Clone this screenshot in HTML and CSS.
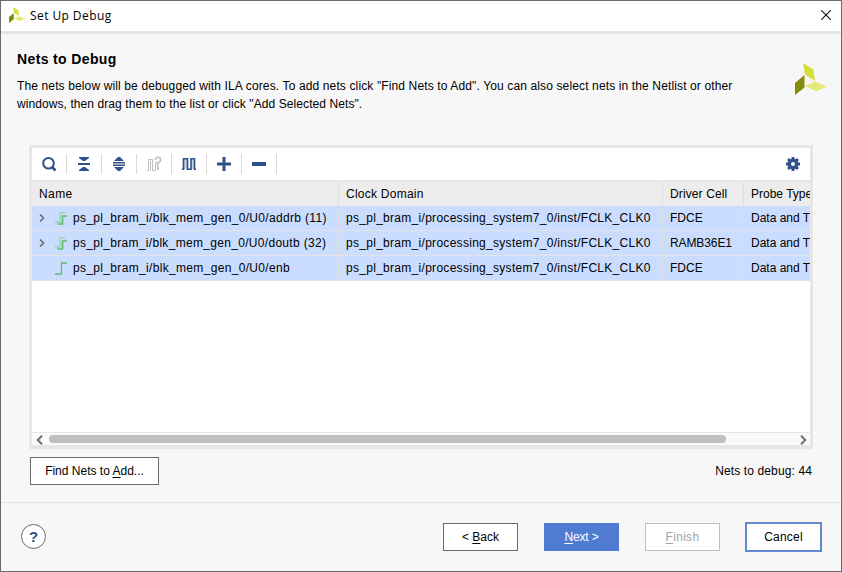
FILE: index.html
```html
<!DOCTYPE html>
<html lang="en">
<head>
<meta charset="utf-8">
<title>Set Up Debug</title>
<link rel="stylesheet" href="styles.css">
</head>
<body>
<svg width="0" height="0" class="defs">
  <symbol id="logo" viewBox="0 0 32 32"><path d="M8 0l10.500 6.500L20 18 10 11.500z" fill="#d5df39"/><path d="M0 20L9.500 12v12.500L0 32z" fill="#858b0b"/><path d="M10 23l10-4.500L32 23.500 21 28.500z" fill="#e3e97c"/></symbol>
  <symbol id="bus" viewBox="0 0 12 13"><path d="M0 10h5V1h5" fill="none" stroke="#9bd4ae" stroke-width="1.300"/><path d="M2.500 12h5V4H12" fill="none" stroke="#5dbb70" stroke-width="1.600"/></symbol>
</svg>
<div class="window">
  <header class="titlebar">
    <svg class="app-icon"><use href="#logo"/></svg>
    <span class="title">Set Up Debug</span>
    <svg class="close" width="10" height="10" viewBox="0 0 10 10"><path d="M.2.200l9.600 9.600M9.800.200L.2 9.800" stroke="#111" stroke-width="1.100"/></svg>
  </header>
  <section class="intro">
    <div>
      <h1>Nets to Debug</h1>
      <p><span class="line-one">The nets below will be debugged with ILA cores. To add nets click "Find Nets to Add". You can also select nets in the Netlist or other</span><br><span class="line-two">windows, then drag them to the list or click "Add Selected Nets".</span></p>
    </div>
    <svg class="brand"><use href="#logo"/></svg>
  </section>
  <main class="panel">
    <div class="toolbar">
      <span class="tool"><svg width="16" height="16" viewBox="0 0 16 16"><circle cx="7.500" cy="7.300" r="5.300" fill="none" stroke="#30508a" stroke-width="2"/><path d="M11 11l3.500 3.500" stroke="#30508a" stroke-width="2.700"/></svg></span>
      <span class="tool"><svg width="16" height="16" viewBox="0 0 16 16" fill="#30508a"><path d="M3 1h10v1L9 5H7L3 2zM2 7h12v2H2zM7 11h2l4 3v1H3v-1z"/></svg></span>
      <span class="tool"><svg width="16" height="16" viewBox="0 0 16 16" fill="#30508a"><path d="M7 1h2l4 4H3zM2 6h12v1.500H2zM2 8.500h12V10H2zM3 11h10l-4 4H7z"/></svg></span>
      <span class="tool"><svg width="16" height="16" viewBox="0 0 16 16" fill="none" stroke="#bfbfbf"><path d="M1 14.500h1.500v-11h4v11h3v-8h2M4.500 5v9.500M11.500 8v6.500"/><path d="M9.500 4V2.500l1-1h3l1 1V5L12 7v2.500M12 11v3" stroke-width="1.600"/></svg></span>
      <span class="tool"><svg width="16" height="16" viewBox="0 0 16 16"><path d="M2 3h4v10H2zM10 3h4v10h-4z" fill="#c9d3e4"/><path d="M1 13.200h1.500V2.800h4v10.400h3.500V2.800h3.500v10.400H15" fill="none" stroke="#30508a" stroke-width="1.600"/></svg></span>
      <span class="tool"><svg width="16" height="16" viewBox="0 0 16 16"><path d="M8 1v14M1 8h14" stroke="#30508a" stroke-width="3"/></svg></span>
      <span class="tool"><svg width="16" height="16" viewBox="0 0 16 16"><path d="M1 8h14" stroke="#30508a" stroke-width="4"/></svg></span>
      <svg class="gear" width="16" height="16" viewBox="0 0 16 16"><path d="M8 1v14M1 8h14M3 3l10 10M13 3L3 13" stroke="#30508a" stroke-width="2.800"/><circle cx="8" cy="8" r="3.700" fill="#fff" stroke="#30508a" stroke-width="3.400"/></svg>
    </div>
    <div class="row head"><div class="cell"><span class="h1w">Name</span></div><div class="cell"><span class="h2w">Clock Domain</span></div><div class="cell"><span class="h3w">Driver Cell</span></div><div class="cell"><span>Probe Type</span></div></div>
    <div class="row"><div class="cell"><svg class="arrow" width="6" height="8" viewBox="0 0 6 8"><path d="M1 .5L4.500 4 1 7.500"/></svg><svg class="wave"><use href="#bus"/></svg><span class="net">ps_pl_bram_i/blk_mem_gen_0/U0/addrb (11)</span></div><div class="cell"><span class="clk">ps_pl_bram_i/processing_system7_0/inst/FCLK_CLK0</span></div><div class="cell"><span>FDCE</span></div><div class="cell"><span>Data and Trigger</span></div></div>
    <div class="row"><div class="cell"><svg class="arrow" width="6" height="8" viewBox="0 0 6 8"><path d="M1 .5L4.500 4 1 7.500"/></svg><svg class="wave"><use href="#bus"/></svg><span class="net second">ps_pl_bram_i/blk_mem_gen_0/U0/doutb (32)</span></div><div class="cell"><span class="clk">ps_pl_bram_i/processing_system7_0/inst/FCLK_CLK0</span></div><div class="cell"><span class="ram">RAMB36E1</span></div><div class="cell"><span>Data and Trigger</span></div></div>
    <div class="row"><div class="cell"><span class="arrow"></span><svg class="wave" viewBox="0 0 12 13"><path d="M0 12h6.500V1H12" fill="none" stroke="#5dbb70" stroke-width="1.300"/></svg><span class="net">ps_pl_bram_i/blk_mem_gen_0/U0/enb</span></div><div class="cell"><span class="clk">ps_pl_bram_i/processing_system7_0/inst/FCLK_CLK0</span></div><div class="cell"><span>FDCE</span></div><div class="cell"><span>Data and Trigger</span></div></div>
    <div class="scrollbar">
      <svg width="7" height="10" viewBox="0 0 7 10"><path d="M6 .7L1.700 5 6 9.300"/></svg>
      <div class="track"><div class="thumb"></div></div>
      <svg width="7" height="10" viewBox="0 0 7 10"><path d="M1 .7L5.300 5 1 9.300"/></svg>
    </div>
  </main>
  <div class="below"><button class="find">Find Nets to <u>A</u>dd...</button><span class="count">Nets to debug: 44</span></div>
  <footer>
    <button class="help">?</button>
    <button class="btn">&lt; <u>B</u>ack</button>
    <button class="btn next"><u>N</u>ext &gt;</button>
    <button class="btn finish"><u>F</u>inish</button>
    <button class="btn cancel">Cancel</button>
  </footer>
</div>
</body>
</html>
```
FILE: styles.css
```css
* { box-sizing: border-box; }
body { margin: 0; font: 12px/18px "Liberation Sans", Arial, sans-serif; color: #000; }
.defs { position: absolute; }
svg { display: block; flex: none; }
.window { width: 842px; height: 572px; border: 1px solid #6b6b6b; background: #f7f7f7; display: flex; flex-direction: column; overflow: hidden; }
.titlebar { height: 33px; flex: none; background: #fff; border-bottom: 3px solid #e6e6e6; display: flex; align-items: center; padding: 0 10px 0 8px; }
.app-icon { width: 16px; height: 16px; margin-top: -2px; }
.title { font: 12px/18px "Open Sans", sans-serif; margin-left: 5px; letter-spacing: .42px; }
.close { margin-left: auto; margin-top: -2px; }
.intro { height: 111px; flex: none; display: flex; justify-content: space-between; padding: 15px 14px 0 16px; }
h1 { font: bold 14px/20px "Liberation Sans", sans-serif; margin: 0 0 8px; letter-spacing: .37px; }
p { margin: 0; white-space: nowrap; }
.line-one { letter-spacing: .13px; }
.line-two { letter-spacing: .08px; }
.brand { width: 32px; height: 32px; margin-top: 14px; }
.panel { width: 784px; height: 304px; flex: none; margin-left: 28px; border: 3px solid #e6e6e6; border-bottom-width: 4px; background: #fff; display: flex; flex-direction: column; }
.toolbar { height: 34px; flex: none; border-bottom: 2px solid #e6e6e6; display: flex; align-items: center; }
.tool { width: 35px; height: 20px; border-right: 1px solid #d9d9d9; display: flex; align-items: center; padding-left: 9px; }
.gear { margin-left: auto; margin-right: 9px; }
.row { height: 25px; flex: none; display: grid; grid-template-columns: 307px 324px 81px 66px; background: #cbddff; border-bottom: 1px solid #e3e3e3; white-space: nowrap; }
.row.head { height: 24px; background: #ececec; border-bottom: 0; }
.cell { border-right: 1px solid #dedede; padding-left: 7px; display: flex; align-items: center; overflow: hidden; }
.cell:last-child { border-right: 0; }
.h1w { letter-spacing: .4px; }
.h2w { letter-spacing: .25px; }
.h3w { letter-spacing: .12px; }
.net { letter-spacing: .33px; }
.net.second { letter-spacing: .31px; }
.clk { letter-spacing: .29px; }
.ram { letter-spacing: -.1px; }
.arrow { width: 6px; flex: none; fill: none; stroke: #707070; stroke-width: 1.7; }
.wave { width: 12px; height: 13px; margin: 0 6px 0 10px; }
.scrollbar { margin-top: auto; height: 13px; border-top: 1px solid #e6e6e6; background: #fafafa; display: flex; align-items: center; padding: 0 3px 0 4px; fill: none; stroke: #707070; stroke-width: 2; }
.scrollbar svg { margin-top: 2px; }
.track { flex: 1; padding-left: 6px; }
.thumb { width: 677px; height: 8px; border-radius: 4px; background: #bfbfbf; }
.below { height: 53px; flex: none; display: flex; justify-content: space-between; padding: 8px 29px 0 29px; line-height: 28px; }
.count { letter-spacing: .12px; }
button { font: inherit; color: #000; background: #fff; border: 1px solid #6b6b6b; padding: 0; margin: 0; white-space: nowrap; line-height: 18px; }
u { text-underline-offset: 2px; }
.find { width: 129px; height: 28px; }
footer { flex: 1; border-top: 1px solid #e3e3e3; display: flex; align-items: center; padding: 0 19px 1px 20px; }
.help { width: 25px; height: 25px; border-radius: 50%; color: #30508a; font: bold 15px/23px "Liberation Sans", sans-serif; margin-right: auto; }
.btn { width: 75px; height: 28px; margin-right: 26px; }
.next { background: #4f7cd1; border-color: #4f7cd1; color: #fff; letter-spacing: -.15px; }
.finish { color: #a3a3a3; border-color: #bfbfbf; margin-right: 25px; letter-spacing: .3px; }
.cancel { width: 77px; height: 30px; border: 2px solid #6288cd; margin: 0; letter-spacing: .2px; }
```
